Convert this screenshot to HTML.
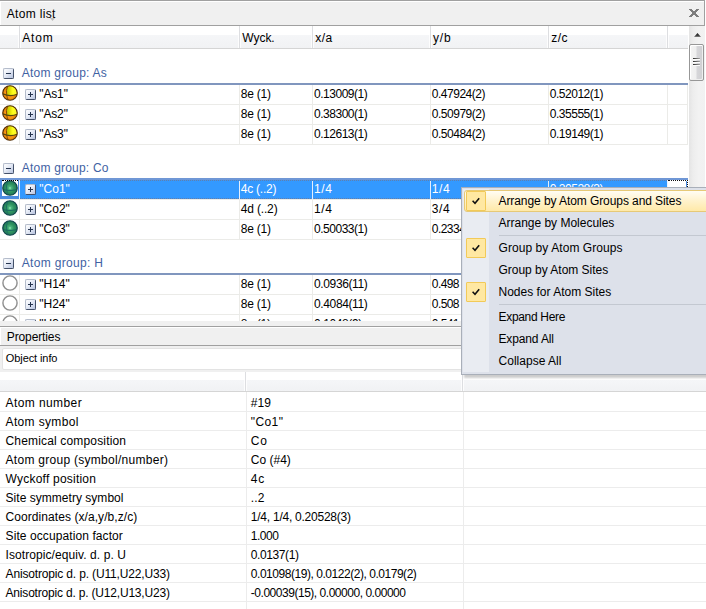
<!DOCTYPE html>
<html>
<head>
<meta charset="utf-8">
<title>Atom list</title>
<style>
html,body{margin:0;padding:0;}
body{width:706px;height:609px;position:relative;overflow:hidden;background:#fff;
  font-family:"Liberation Sans",sans-serif;font-size:12px;color:#000;}
.abs{position:absolute;}
.t{position:absolute;white-space:nowrap;line-height:14px;height:14px;}
.cap{position:absolute;left:0;width:704px;background:#f0f0f0;border-top:1px solid #a0a0a0;border-bottom:1px solid #a0a0a0;border-right:1px solid #a0a0a0;box-shadow:inset 1px 1px 0 #fff;}
.hdr{position:absolute;background:linear-gradient(#fff 0,#fff 9px,#f5f6f8 9px,#f1f2f4 100%);border-bottom:1px solid #d5d5d5;}
.hsep{position:absolute;top:0;width:1px;height:100%;background:#dddee1;box-shadow:-1px 0 0 rgba(255,255,255,.8),1px 0 0 rgba(255,255,255,.8);}
.vs{position:absolute;top:0;width:1px;height:20px;background:#ebebe8;}
.gline{position:absolute;left:0;width:688px;height:2px;background:#8096be;}
.box{position:absolute;width:9px;height:9px;border:1px solid #8a93a8;border-radius:2px;border-top-color:#b4bccb;border-left-color:#b4bccb;border-bottom-color:#435069;border-right-color:#435069;background:linear-gradient(135deg,#ffffff 0%,#e6ebf6 45%,#b7c3de 100%);}
.box i{position:absolute;left:2px;top:4px;width:5px;height:1px;background:#26354f;}
.box b{position:absolute;left:4px;top:2px;width:1px;height:5px;background:#26354f;}
.ico{position:absolute;left:2px;width:16px;height:16px;}
.sel{position:absolute;background:#3399ff;}
.prow{position:absolute;left:0;width:706px;height:1px;background:#ececec;}
.menu{position:absolute;left:461px;top:187px;width:260px;height:186px;border:1px solid #a9afb9;background:#dde1ea;box-shadow:3px 3px 2px rgba(0,0,0,0.2);}
.gut{position:absolute;left:1px;top:1px;width:26px;height:183px;background:#e9ecf2;}
.chk{position:absolute;left:466px;width:18px;height:18px;border:1px solid #f2ca58;background:#ffe8a2;border-radius:1px;}
.msep{position:absolute;left:499px;width:207px;height:1px;background:#c3c8d1;}
</style>
</head>
<body>

<svg width="0" height="0" style="position:absolute">
 <defs>
  <radialGradient id="gAs" cx="0.45" cy="0.55" r="0.62"><stop offset="0" stop-color="#ffa71e"/><stop offset="0.55" stop-color="#f4900f"/><stop offset="0.85" stop-color="#d87806"/><stop offset="1" stop-color="#a85a04"/></radialGradient>
  <linearGradient id="gY" x1="0" y1="0" x2="1" y2="0"><stop offset="0" stop-color="#b9b800"/><stop offset="0.35" stop-color="#e2e205"/><stop offset="0.6" stop-color="#ffff1c"/><stop offset="1" stop-color="#f4f22a"/></linearGradient>
  <radialGradient id="gCo" cx="0.5" cy="0.5" r="0.6"><stop offset="0" stop-color="#9cf5bc"/><stop offset="0.16" stop-color="#4db57f"/><stop offset="0.45" stop-color="#2f945f"/><stop offset="0.8" stop-color="#237a58"/><stop offset="1" stop-color="#0f4248"/></radialGradient>
  <radialGradient id="gH" cx="0.5" cy="0.5" r="0.55"><stop offset="0" stop-color="#ffffff"/><stop offset="0.75" stop-color="#ffffff"/><stop offset="1" stop-color="#d6d6d6"/></radialGradient>
  <linearGradient id="gArr" x1="0" y1="0" x2="0" y2="1"><stop offset="0" stop-color="#1e1e1e"/><stop offset="0.6" stop-color="#3a3a3a"/><stop offset="1" stop-color="#8a8a8a"/></linearGradient>
 </defs>
</svg>

<div class="cap" style="top:0;height:24px;"></div>
<div class="t" style="left:6.8px;top:7px;letter-spacing:0.32px;">Atom list</div>
<svg class="abs" style="left:50px;top:18px;" width="5" height="3" viewBox="0 0 5 3"><path d="M0 0 L5 0 L2.5 3 Z" fill="#bdbdbd"/></svg>
<svg class="abs" style="left:689px;top:9px;" width="10" height="8" viewBox="0 0 10 8" shape-rendering="crispEdges">
 <g fill="#7d7d7d">
  <rect x="0" y="0" width="3" height="1"/><rect x="7" y="0" width="3" height="1"/>
  <rect x="1" y="1" width="3" height="1"/><rect x="6" y="1" width="3" height="1"/>
  <rect x="2" y="2" width="6" height="1"/>
  <rect x="3" y="3" width="4" height="2"/>
  <rect x="2" y="5" width="6" height="1"/>
  <rect x="1" y="6" width="3" height="1"/><rect x="6" y="6" width="3" height="1"/>
  <rect x="0" y="7" width="3" height="1"/><rect x="7" y="7" width="3" height="1"/>
 </g>
</svg>
<div class="hdr" style="left:0;top:26px;width:688px;height:22px;"><div class="hsep" style="left:19px"></div><div class="hsep" style="left:239px"></div><div class="hsep" style="left:312px"></div><div class="hsep" style="left:430px"></div><div class="hsep" style="left:548px"></div><div class="hsep" style="left:667px"></div></div>
<div class="t" style="left:22.3px;top:31px;letter-spacing:0.80px;">Atom</div>
<div class="t" style="left:242.3px;top:31px;letter-spacing:-0.04px;">Wyck.</div>
<div class="t" style="left:315.3px;top:31px;letter-spacing:0.49px;">x/a</div>
<div class="t" style="left:433.05px;top:31px;letter-spacing:0.80px;">y/b</div>
<div class="t" style="left:551.3px;top:31px;letter-spacing:0.38px;">z/c</div>
<div class="abs" style="left:689px;top:26px;width:16px;height:296px;background:linear-gradient(90deg,#e4e4e4 0,#ededed 25%,#f2f2f2 60%,#f1f1f1 100%);"></div>
<svg class="abs" style="left:694px;top:33px;" width="7" height="4" viewBox="0 0 7 4"><path d="M0 4 L3.5 0 L7 4 Z" fill="url(#gArr)"/></svg>
<div class="abs" style="left:689px;top:44px;width:13px;height:35px;border:1px solid #979797;border-radius:2px;background:linear-gradient(90deg,#f4f4f4 0%,#efefef 45%,#d6d6d9 55%,#cfcfd2 100%);box-shadow:inset 1px 1px 0 #fff,inset -1px -1px 0 #eee;"></div>
<div class="abs" style="left:693px;top:58px;width:7px;height:1px;background:linear-gradient(90deg,#2e2e2e,#6a6a6a 50%,#a5a5a5);"></div><div class="abs" style="left:693px;top:59px;width:7px;height:1px;background:#fcfcfc;"></div><div class="abs" style="left:693px;top:61px;width:7px;height:1px;background:linear-gradient(90deg,#2e2e2e,#6a6a6a 50%,#a5a5a5);"></div><div class="abs" style="left:693px;top:62px;width:7px;height:1px;background:#fcfcfc;"></div><div class="abs" style="left:693px;top:64px;width:7px;height:1px;background:linear-gradient(90deg,#2e2e2e,#6a6a6a 50%,#a5a5a5);"></div><div class="abs" style="left:693px;top:65px;width:7px;height:1px;background:#fcfcfc;"></div>
<div class="box" style="left:3px;top:68px"><i></i></div>
<div class="t" style="left:21.8px;top:66px;color:#3f62a3;letter-spacing:0.22px;">Atom group: As</div>
<div class="gline" style="top:83px"></div>
<div class="abs" style="left:0;top:85px;width:688px;height:20px;overflow:hidden;">
<div class="abs" style="left:0;top:19px;width:688px;height:1px;background:#ebebe8;"></div>
<div class="vs" style="left:19px"></div>
<div class="vs" style="left:239px"></div>
<div class="vs" style="left:312px"></div>
<div class="vs" style="left:430px"></div>
<div class="vs" style="left:548px"></div>
<div class="vs" style="left:667px"></div>
<div class="vs" style="left:687px"></div>
<svg class="ico" style="top:0px" viewBox="0 0 16 16">
<circle cx="8" cy="8" r="7.3" fill="url(#gAs)"/>
<path d="M5.7 1.1 A7.3 7.3 0 0 1 15.2 9.3 Q10 11.2 4.7 9.9 Q3.7 5.2 5.7 1.1Z" fill="url(#gY)"/>
<path d="M5.7 1.1 Q3.6 5.4 4.7 9.9 Q5.1 13 6.3 15.1" stroke="#8a4c05" stroke-width="1" fill="none"/>
<path d="M0.8 8.9 Q8 12 15.2 9.3" stroke="#57470d" stroke-width="1.2" fill="none"/>
<circle cx="8" cy="8" r="7.25" fill="none" stroke="#52300a" stroke-width="1.15"/>
</svg>
<div class="box" style="left:25px;top:4px"><i></i><b></b></div>
<div class="t" style="left:39.3px;top:2px;letter-spacing:-0.15px;">&quot;As1&quot;</div>
<div class="t" style="left:240.8px;top:2px;letter-spacing:-0.25px;">8e (1)</div>
<div class="t" style="left:314.05px;top:2px;letter-spacing:-0.48px;">0.13009(1)</div>
<div class="t" style="left:431.8px;top:2px;letter-spacing:-0.48px;">0.47924(2)</div>
<div class="t" style="left:549.8px;top:2px;letter-spacing:-0.48px;">0.52012(1)</div>
</div>
<div class="abs" style="left:0;top:105px;width:688px;height:20px;overflow:hidden;">
<div class="abs" style="left:0;top:19px;width:688px;height:1px;background:#ebebe8;"></div>
<div class="vs" style="left:19px"></div>
<div class="vs" style="left:239px"></div>
<div class="vs" style="left:312px"></div>
<div class="vs" style="left:430px"></div>
<div class="vs" style="left:548px"></div>
<div class="vs" style="left:667px"></div>
<div class="vs" style="left:687px"></div>
<svg class="ico" style="top:0px" viewBox="0 0 16 16">
<circle cx="8" cy="8" r="7.3" fill="url(#gAs)"/>
<path d="M5.7 1.1 A7.3 7.3 0 0 1 15.2 9.3 Q10 11.2 4.7 9.9 Q3.7 5.2 5.7 1.1Z" fill="url(#gY)"/>
<path d="M5.7 1.1 Q3.6 5.4 4.7 9.9 Q5.1 13 6.3 15.1" stroke="#8a4c05" stroke-width="1" fill="none"/>
<path d="M0.8 8.9 Q8 12 15.2 9.3" stroke="#57470d" stroke-width="1.2" fill="none"/>
<circle cx="8" cy="8" r="7.25" fill="none" stroke="#52300a" stroke-width="1.15"/>
</svg>
<div class="box" style="left:25px;top:4px"><i></i><b></b></div>
<div class="t" style="left:39.3px;top:2px;letter-spacing:-0.15px;">&quot;As2&quot;</div>
<div class="t" style="left:240.8px;top:2px;letter-spacing:-0.25px;">8e (1)</div>
<div class="t" style="left:314.05px;top:2px;letter-spacing:-0.48px;">0.38300(1)</div>
<div class="t" style="left:431.8px;top:2px;letter-spacing:-0.48px;">0.50979(2)</div>
<div class="t" style="left:549.8px;top:2px;letter-spacing:-0.48px;">0.35555(1)</div>
</div>
<div class="abs" style="left:0;top:125px;width:688px;height:20px;overflow:hidden;">
<div class="abs" style="left:0;top:19px;width:688px;height:1px;background:#ebebe8;"></div>
<div class="vs" style="left:19px"></div>
<div class="vs" style="left:239px"></div>
<div class="vs" style="left:312px"></div>
<div class="vs" style="left:430px"></div>
<div class="vs" style="left:548px"></div>
<div class="vs" style="left:667px"></div>
<div class="vs" style="left:687px"></div>
<svg class="ico" style="top:0px" viewBox="0 0 16 16">
<circle cx="8" cy="8" r="7.3" fill="url(#gAs)"/>
<path d="M5.7 1.1 A7.3 7.3 0 0 1 15.2 9.3 Q10 11.2 4.7 9.9 Q3.7 5.2 5.7 1.1Z" fill="url(#gY)"/>
<path d="M5.7 1.1 Q3.6 5.4 4.7 9.9 Q5.1 13 6.3 15.1" stroke="#8a4c05" stroke-width="1" fill="none"/>
<path d="M0.8 8.9 Q8 12 15.2 9.3" stroke="#57470d" stroke-width="1.2" fill="none"/>
<circle cx="8" cy="8" r="7.25" fill="none" stroke="#52300a" stroke-width="1.15"/>
</svg>
<div class="box" style="left:25px;top:4px"><i></i><b></b></div>
<div class="t" style="left:39.3px;top:2px;letter-spacing:-0.15px;">&quot;As3&quot;</div>
<div class="t" style="left:240.8px;top:2px;letter-spacing:-0.25px;">8e (1)</div>
<div class="t" style="left:314.05px;top:2px;letter-spacing:-0.48px;">0.12613(1)</div>
<div class="t" style="left:431.8px;top:2px;letter-spacing:-0.48px;">0.50484(2)</div>
<div class="t" style="left:549.8px;top:2px;letter-spacing:-0.48px;">0.19149(1)</div>
</div>
<div class="box" style="left:3px;top:163px"><i></i></div>
<div class="t" style="left:21.8px;top:161px;color:#3f62a3;letter-spacing:0.20px;">Atom group: Co</div>
<div class="gline" style="top:178px;background:#6f97d6"></div>
<div class="abs" style="left:0;top:180px;width:688px;height:20px;overflow:hidden;">
<div class="abs" style="left:0;top:19px;width:688px;height:1px;background:#ebebe8;"></div>
<div class="vs" style="left:19px"></div>
<div class="vs" style="left:239px"></div>
<div class="vs" style="left:312px"></div>
<div class="vs" style="left:430px"></div>
<div class="vs" style="left:548px"></div>
<div class="vs" style="left:667px"></div>
<div class="vs" style="left:687px"></div>
<div class="abs" style="left:0;top:0;width:19px;height:19px;background:#4b8be0;"></div>
<div class="abs" style="left:2px;top:0;width:16px;height:16px;background:#fff;border-top:1px dotted #000;box-sizing:border-box;"></div>
<div class="abs" style="left:19px;top:0;width:1px;height:19px;background:#e6f0ff;"></div>
<div class="sel" style="left:20px;top:0;width:647px;height:19px;"></div>
<div class="abs" style="left:20px;top:0;width:647px;height:1px;background:repeating-linear-gradient(90deg,#5f80ad 0 1px,#3b95f5 1px 2px);"></div>
<div class="abs" style="left:20px;top:18px;width:647px;height:1px;background:repeating-linear-gradient(90deg,#5f80ad 0 1px,#3b95f5 1px 2px);"></div>
<div class="abs" style="left:239px;top:1px;width:1px;height:18px;background:#e4eefc;"></div>
<div class="abs" style="left:312px;top:1px;width:1px;height:18px;background:#e4eefc;"></div>
<div class="abs" style="left:430px;top:1px;width:1px;height:18px;background:#e4eefc;"></div>
<div class="abs" style="left:548px;top:1px;width:1px;height:18px;background:#e4eefc;"></div>
<div class="abs" style="left:667px;top:0;width:1px;height:19px;background:#eef4ff;"></div>
<div class="abs" style="left:668px;top:0;width:20px;height:19px;box-sizing:border-box;background:#fff;border-top:1px dotted #111;border-right:1px dotted #111;"></div>
<div class="abs" style="left:686px;top:1px;width:1px;height:18px;background:#4b8be0;"></div>
<svg class="ico" style="top:0px" viewBox="0 0 16 16">
<circle cx="8" cy="8" r="7.3" fill="url(#gCo)"/>
<path d="M5.8 1.2 Q3.7 5.6 4.8 10.2 Q5.2 13 6.4 15" stroke="#1b6b66" stroke-width="0.9" fill="none"/>
<path d="M0.9 9.7 Q8 11.5 15.1 9.7" stroke="#17645f" stroke-width="0.9" fill="none"/>
<circle cx="8" cy="8" r="7.25" fill="none" stroke="#10454c" stroke-width="1.15"/>
</svg>
<div class="abs" style="left:2px;top:0;width:16px;height:0;border-top:1px dotted #000;"></div>
<div class="box" style="left:25px;top:4px"><i></i><b></b></div>
<div class="t" style="left:39.3px;top:2px;color:#fff;letter-spacing:0.01px;">&quot;Co1&quot;</div>
<div class="t" style="left:240.8px;top:2px;color:#fff;letter-spacing:-0.25px;">4c (..2)</div>
<div class="t" style="left:314.05px;top:2px;color:#fff;letter-spacing:0.58px;">1/4</div>
<div class="t" style="left:431.8px;top:2px;color:#fff;letter-spacing:0.58px;">1/4</div>
<div class="t" style="left:549.8px;top:2px;color:#fff;letter-spacing:-0.48px;">0.20528(3)</div>
</div>
<div class="abs" style="left:0;top:200px;width:688px;height:20px;overflow:hidden;">
<div class="abs" style="left:0;top:19px;width:688px;height:1px;background:#ebebe8;"></div>
<div class="vs" style="left:19px"></div>
<div class="vs" style="left:239px"></div>
<div class="vs" style="left:312px"></div>
<div class="vs" style="left:430px"></div>
<div class="vs" style="left:548px"></div>
<div class="vs" style="left:667px"></div>
<div class="vs" style="left:687px"></div>
<svg class="ico" style="top:0px" viewBox="0 0 16 16">
<circle cx="8" cy="8" r="7.3" fill="url(#gCo)"/>
<path d="M5.8 1.2 Q3.7 5.6 4.8 10.2 Q5.2 13 6.4 15" stroke="#1b6b66" stroke-width="0.9" fill="none"/>
<path d="M0.9 9.7 Q8 11.5 15.1 9.7" stroke="#17645f" stroke-width="0.9" fill="none"/>
<circle cx="8" cy="8" r="7.25" fill="none" stroke="#10454c" stroke-width="1.15"/>
</svg>
<div class="box" style="left:25px;top:4px"><i></i><b></b></div>
<div class="t" style="left:39.3px;top:2px;letter-spacing:0.01px;">&quot;Co2&quot;</div>
<div class="t" style="left:240.8px;top:2px;letter-spacing:-0.17px;">4d (..2)</div>
<div class="t" style="left:314.05px;top:2px;letter-spacing:0.58px;">1/4</div>
<div class="t" style="left:431.8px;top:2px;letter-spacing:0.58px;">3/4</div>
<div class="t" style="left:549.8px;top:2px;"></div>
</div>
<div class="abs" style="left:0;top:220px;width:688px;height:20px;overflow:hidden;">
<div class="abs" style="left:0;top:19px;width:688px;height:1px;background:#ebebe8;"></div>
<div class="vs" style="left:19px"></div>
<div class="vs" style="left:239px"></div>
<div class="vs" style="left:312px"></div>
<div class="vs" style="left:430px"></div>
<div class="vs" style="left:548px"></div>
<div class="vs" style="left:667px"></div>
<div class="vs" style="left:687px"></div>
<svg class="ico" style="top:0px" viewBox="0 0 16 16">
<circle cx="8" cy="8" r="7.3" fill="url(#gCo)"/>
<path d="M5.8 1.2 Q3.7 5.6 4.8 10.2 Q5.2 13 6.4 15" stroke="#1b6b66" stroke-width="0.9" fill="none"/>
<path d="M0.9 9.7 Q8 11.5 15.1 9.7" stroke="#17645f" stroke-width="0.9" fill="none"/>
<circle cx="8" cy="8" r="7.25" fill="none" stroke="#10454c" stroke-width="1.15"/>
</svg>
<div class="box" style="left:25px;top:4px"><i></i><b></b></div>
<div class="t" style="left:39.3px;top:2px;letter-spacing:0.01px;">&quot;Co3&quot;</div>
<div class="t" style="left:240.8px;top:2px;letter-spacing:-0.25px;">8e (1)</div>
<div class="t" style="left:314.05px;top:2px;letter-spacing:-0.48px;">0.50033(1)</div>
<div class="t" style="left:431.8px;top:2px;letter-spacing:-0.54px;">0.2334</div>
<div class="t" style="left:549.8px;top:2px;"></div>
</div>
<div class="box" style="left:3px;top:258px"><i></i></div>
<div class="t" style="left:21.8px;top:256px;color:#3f62a3;letter-spacing:0.31px;">Atom group: H</div>
<div class="gline" style="top:273px"></div>
<div class="abs" style="left:0;top:275px;width:688px;height:20px;overflow:hidden;">
<div class="abs" style="left:0;top:19px;width:688px;height:1px;background:#ebebe8;"></div>
<div class="vs" style="left:19px"></div>
<div class="vs" style="left:239px"></div>
<div class="vs" style="left:312px"></div>
<div class="vs" style="left:430px"></div>
<div class="vs" style="left:548px"></div>
<div class="vs" style="left:667px"></div>
<div class="vs" style="left:687px"></div>
<svg class="ico" style="top:0px" viewBox="0 0 16 16">
<circle cx="8" cy="8" r="7.1" fill="url(#gH)" stroke="#8f8f8f" stroke-width="1.4"/>
</svg>
<div class="box" style="left:25px;top:4px"><i></i><b></b></div>
<div class="t" style="left:39.3px;top:2px;letter-spacing:-0.01px;">&quot;H14&quot;</div>
<div class="t" style="left:240.8px;top:2px;letter-spacing:-0.25px;">8e (1)</div>
<div class="t" style="left:314.05px;top:2px;letter-spacing:-0.38px;">0.0936(11)</div>
<div class="t" style="left:431.8px;top:2px;letter-spacing:-0.58px;">0.498</div>
<div class="t" style="left:549.8px;top:2px;"></div>
</div>
<div class="abs" style="left:0;top:295px;width:688px;height:20px;overflow:hidden;">
<div class="abs" style="left:0;top:19px;width:688px;height:1px;background:#ebebe8;"></div>
<div class="vs" style="left:19px"></div>
<div class="vs" style="left:239px"></div>
<div class="vs" style="left:312px"></div>
<div class="vs" style="left:430px"></div>
<div class="vs" style="left:548px"></div>
<div class="vs" style="left:667px"></div>
<div class="vs" style="left:687px"></div>
<svg class="ico" style="top:0px" viewBox="0 0 16 16">
<circle cx="8" cy="8" r="7.1" fill="url(#gH)" stroke="#8f8f8f" stroke-width="1.4"/>
</svg>
<div class="box" style="left:25px;top:4px"><i></i><b></b></div>
<div class="t" style="left:39.3px;top:2px;letter-spacing:-0.01px;">&quot;H24&quot;</div>
<div class="t" style="left:240.8px;top:2px;letter-spacing:-0.25px;">8e (1)</div>
<div class="t" style="left:314.05px;top:2px;letter-spacing:-0.38px;">0.4084(11)</div>
<div class="t" style="left:431.8px;top:2px;letter-spacing:-0.58px;">0.508</div>
<div class="t" style="left:549.8px;top:2px;"></div>
</div>
<div class="abs" style="left:0;top:315px;width:688px;height:6px;overflow:hidden;">
<div class="abs" style="left:0;top:19px;width:688px;height:1px;background:#ebebe8;"></div>
<div class="vs" style="left:19px"></div>
<div class="vs" style="left:239px"></div>
<div class="vs" style="left:312px"></div>
<div class="vs" style="left:430px"></div>
<div class="vs" style="left:548px"></div>
<div class="vs" style="left:667px"></div>
<div class="vs" style="left:687px"></div>
<svg class="ico" style="top:0px" viewBox="0 0 16 16">
<circle cx="8" cy="8" r="7.1" fill="url(#gH)" stroke="#8f8f8f" stroke-width="1.4"/>
</svg>
<div class="box" style="left:25px;top:4px"><i></i><b></b></div>
<div class="t" style="left:39.3px;top:2px;letter-spacing:-0.01px;">&quot;H34&quot;</div>
<div class="t" style="left:240.8px;top:2px;letter-spacing:-0.25px;">8e (1)</div>
<div class="t" style="left:314.05px;top:2px;letter-spacing:-0.41px;">0.1048(9)</div>
<div class="t" style="left:431.8px;top:2px;letter-spacing:-0.58px;">0.541</div>
<div class="t" style="left:549.8px;top:2px;"></div>
</div>
<div class="abs" style="left:0;top:321px;width:706px;height:5px;background:#f0f0f0;"></div>
<div class="cap" style="top:326px;height:18px;"></div>
<div class="t" style="left:6.8px;top:330px;letter-spacing:-0.12px;">Properties</div>
<div class="abs" style="left:0;top:346px;width:706px;height:26px;background:#f0f0f0;"></div>
<div class="abs" style="left:2px;top:348px;width:710px;height:20px;background:#fff;border:1px solid #e3e3e3;border-radius:2px;"></div>
<div class="t" style="left:5.8px;top:351px;font-size:11px;letter-spacing:-0.09px;">Object info</div>
<div class="hdr" style="left:0;top:372px;width:706px;height:19px;background:linear-gradient(#fff 0,#fff 8px,#f5f6f8 8px,#f1f2f4 100%);"><div class="hsep" style="left:245px"></div><div class="hsep" style="left:462px"></div></div>
<div class="abs" style="left:246px;top:392px;width:1px;height:217px;background:#ececec;"></div>
<div class="abs" style="left:463px;top:392px;width:1px;height:217px;background:#ececec;"></div>
<div class="prow" style="top:411px"></div>
<div class="t" style="left:5.55px;top:396px;letter-spacing:0.41px;">Atom number</div>
<div class="t" style="left:250.8px;top:396px;letter-spacing:0.08px;">#19</div>
<div class="prow" style="top:430px"></div>
<div class="t" style="left:5.55px;top:415px;letter-spacing:0.35px;">Atom symbol</div>
<div class="t" style="left:250.8px;top:415px;letter-spacing:0.39px;">&quot;Co1&quot;</div>
<div class="prow" style="top:449px"></div>
<div class="t" style="left:5.55px;top:434px;letter-spacing:0.16px;">Chemical composition</div>
<div class="t" style="left:250.8px;top:434px;letter-spacing:0.80px;">Co</div>
<div class="prow" style="top:468px"></div>
<div class="t" style="left:5.55px;top:453px;letter-spacing:0.28px;">Atom group (symbol/number)</div>
<div class="t" style="left:250.8px;top:453px;letter-spacing:0.01px;">Co (#4)</div>
<div class="prow" style="top:487px"></div>
<div class="t" style="left:5.55px;top:472px;letter-spacing:0.22px;">Wyckoff position</div>
<div class="t" style="left:250.8px;top:472px;letter-spacing:0.80px;">4c</div>
<div class="prow" style="top:506px"></div>
<div class="t" style="left:5.55px;top:491px;letter-spacing:0.03px;">Site symmetry symbol</div>
<div class="t" style="left:250.8px;top:491px;letter-spacing:0.13px;">..2</div>
<div class="prow" style="top:525px"></div>
<div class="t" style="left:5.55px;top:510px;letter-spacing:0.07px;">Coordinates (x/a,y/b,z/c)</div>
<div class="t" style="left:250.8px;top:510px;letter-spacing:-0.24px;">1/4, 1/4, 0.20528(3)</div>
<div class="prow" style="top:544px"></div>
<div class="t" style="left:5.55px;top:529px;letter-spacing:0.09px;">Site occupation factor</div>
<div class="t" style="left:250.8px;top:529px;letter-spacing:-0.48px;">1.000</div>
<div class="prow" style="top:563px"></div>
<div class="t" style="left:5.55px;top:548px;letter-spacing:0.08px;">Isotropic/equiv. d. p. U</div>
<div class="t" style="left:250.8px;top:548px;letter-spacing:-0.41px;">0.0137(1)</div>
<div class="prow" style="top:582px"></div>
<div class="t" style="left:5.55px;top:567px;letter-spacing:-0.16px;">Anisotropic d. p. (U11,U22,U33)</div>
<div class="t" style="left:250.8px;top:567px;letter-spacing:-0.46px;">0.01098(19), 0.0122(2), 0.0179(2)</div>
<div class="prow" style="top:601px"></div>
<div class="t" style="left:5.55px;top:586px;letter-spacing:-0.19px;">Anisotropic d. p. (U12,U13,U23)</div>
<div class="t" style="left:250.8px;top:586px;letter-spacing:-0.47px;">-0.00039(15), 0.00000, 0.00000</div>
<div class="menu"><div class="gut"></div></div>
<div class="abs" style="left:464px;top:190px;width:250px;height:20px;border:1px solid #e6c977;border-radius:3px;background:linear-gradient(#fffdf4 0%,#fff3cf 45%,#ffe9a8 100%);"></div>
<div class="chk" style="top:191px"><svg width="18" height="18" viewBox="0 0 18 18" style="position:absolute;left:0;top:0"><path d="M5.6 8.8 L8 11.2 L12.2 6.3" stroke="#111" stroke-width="1.6" fill="none"/></svg></div>
<div class="t" style="left:498.5px;top:194px;letter-spacing:-0.08px;">Arrange by Atom Groups and Sites</div>
<div class="t" style="left:498.5px;top:216px;letter-spacing:-0.01px;">Arrange by Molecules</div>
<div class="chk" style="top:238px"><svg width="18" height="18" viewBox="0 0 18 18" style="position:absolute;left:0;top:0"><path d="M5.6 8.8 L8 11.2 L12.2 6.3" stroke="#111" stroke-width="1.6" fill="none"/></svg></div>
<div class="t" style="left:498.5px;top:241px;letter-spacing:0.07px;">Group by Atom Groups</div>
<div class="t" style="left:498.5px;top:263px;letter-spacing:-0.02px;">Group by Atom Sites</div>
<div class="chk" style="top:282px"><svg width="18" height="18" viewBox="0 0 18 18" style="position:absolute;left:0;top:0"><path d="M5.6 8.8 L8 11.2 L12.2 6.3" stroke="#111" stroke-width="1.6" fill="none"/></svg></div>
<div class="t" style="left:498.5px;top:285px;letter-spacing:0.00px;">Nodes for Atom Sites</div>
<div class="t" style="left:498.5px;top:310px;letter-spacing:-0.31px;">Expand Here</div>
<div class="t" style="left:498.5px;top:332px;letter-spacing:-0.14px;">Expand All</div>
<div class="t" style="left:498.5px;top:354px;letter-spacing:0.02px;">Collapse All</div>
<div class="msep" style="top:235px"></div>
<div class="msep" style="top:304px"></div>
</body>
</html>
